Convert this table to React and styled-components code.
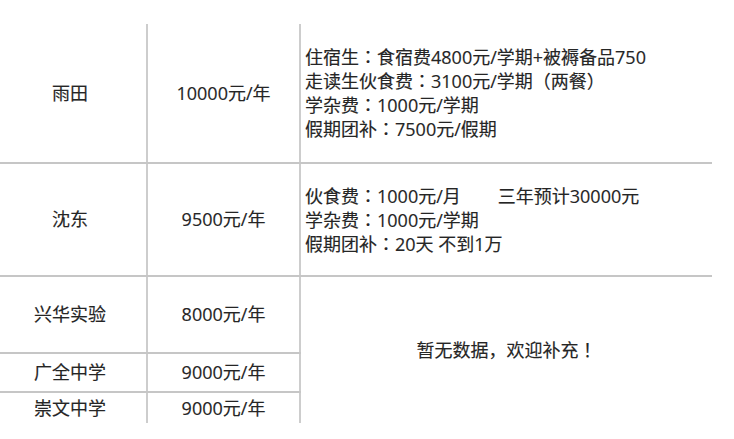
import React from 'react';
import styled, { createGlobalStyle } from 'styled-components';

const GlobalStyle = createGlobalStyle`
  html, body {
    margin: 0;
    padding: 0;
    background: #ffffff;
  }
  body {
    font-family: "Open Sans", "Noto Sans CJK SC", sans-serif;
    color: #252525;
  }
`;

const Page = styled.div`
  width: 734px;
  height: 439px;
  padding-top: 24px;
  box-sizing: border-box;
  overflow: hidden;
`;

const Table = styled.table`
  width: 712px;
  table-layout: fixed;
  border-collapse: collapse;
  font-size: 18px;
  line-height: 23px;
  -webkit-text-stroke: 0.15px #252525;
`;

const Row = styled.tr`
  height: ${props => props.$h}px;
`;

const Cell = styled.td`
  padding: 0;
  text-align: ${props => (props.$left ? 'left' : 'center')};
  vertical-align: middle;
  border-right: ${props => (props.$noRight ? 'none' : '2px solid #cdcdcd')};
  border-bottom: ${props => (props.$noBottom ? 'none' : '2px solid #c6c6c6')};
  padding-left: ${props => (props.$left ? '4px' : '0')};
  white-space: nowrap;
  overflow: hidden;
`;

const Name = styled.span`
  display: inline-block;
  margin-left: -6px;
`;

const Line = styled.div``;

// centred full-width punctuation, as in the source rendering
const P = styled.span`
  font-family: "Noto Sans CJK JP", sans-serif;
`;

const Spaced = styled.span`
  margin-left: 37px;
`;

const rows = [
  { name: '雨田', fee: '10000元/年', h: 139 },
  { name: '沈东', fee: '9500元/年', h: 113 },
];

function App() {
  return (
    <>
      <GlobalStyle />
      <Page>
        <Table>
          <colgroup>
            <col style={{ width: 147 }} />
            <col style={{ width: 153 }} />
            <col style={{ width: 412 }} />
          </colgroup>
          <tbody>
            <Row $h={rows[0].h}>
              <Cell><Name>{rows[0].name}</Name></Cell>
              <Cell>{rows[0].fee}</Cell>
              <Cell $left $noRight>
                <Line>住宿生<P>：</P>食宿费4800元/学期+被褥备品750</Line>
                <Line>走读生伙食费<P>：</P>3100元/学期（两餐）</Line>
                <Line>学杂费<P>：</P>1000元/学期</Line>
                <Line>假期团补<P>：</P>7500元/假期</Line>
              </Cell>
            </Row>
            <Row $h={rows[1].h}>
              <Cell><Name>{rows[1].name}</Name></Cell>
              <Cell>{rows[1].fee}</Cell>
              <Cell $left $noRight>
                <Line>伙食费<P>：</P>1000元/月<Spaced>三年预计30000元</Spaced></Line>
                <Line>学杂费<P>：</P>1000元/学期</Line>
                <Line>假期团补<P>：</P>20天 不到1万</Line>
              </Cell>
            </Row>
            <Row $h={77}>
              <Cell><Name>兴华实验</Name></Cell>
              <Cell>8000元/年</Cell>
              <Cell $noRight $noBottom rowSpan={3}>暂无数据，欢迎补充<P>！</P></Cell>
            </Row>
            <Row $h={39}>
              <Cell><Name>广全中学</Name></Cell>
              <Cell>9000元/年</Cell>
            </Row>
            <Row $h={31}>
              <Cell $noBottom><Name>崇文中学</Name></Cell>
              <Cell $noBottom>9000元/年</Cell>
            </Row>
          </tbody>
        </Table>
      </Page>
    </>
  );
}

export default App;
